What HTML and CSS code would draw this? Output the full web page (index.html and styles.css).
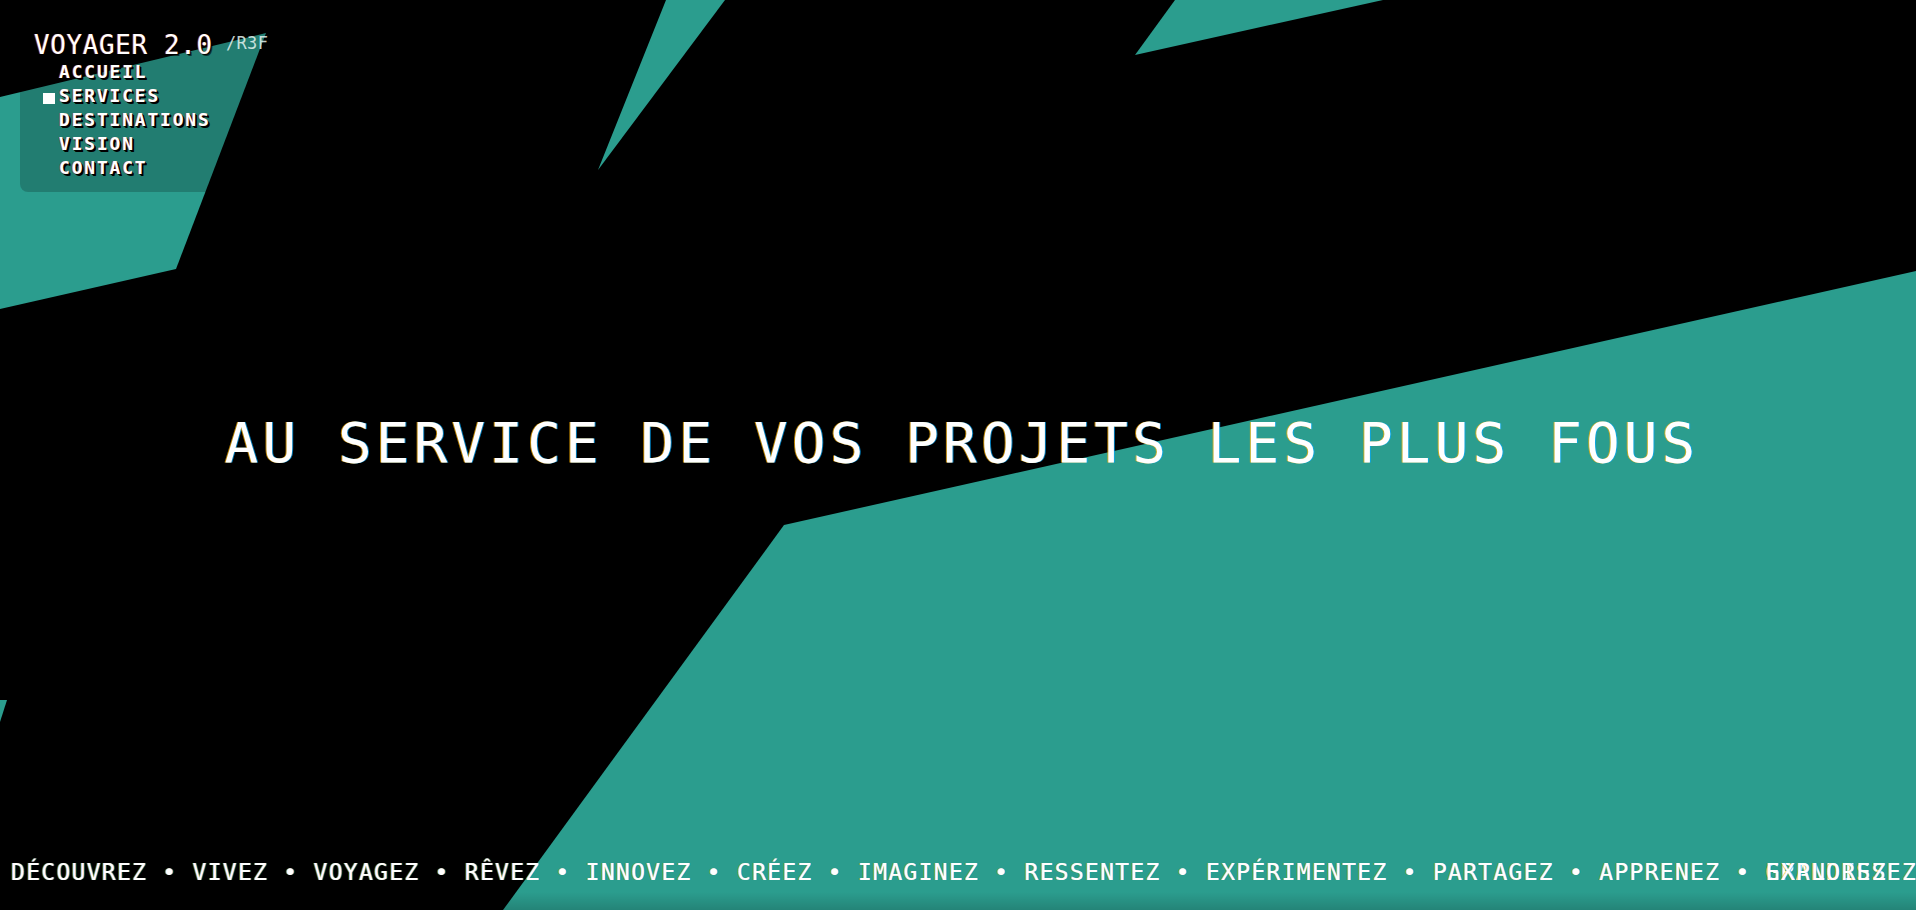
FILE: index.html
```html
<!DOCTYPE html>
<html lang="fr">
<head>
<meta charset="utf-8">
<title>Voyager 2.0</title>
<link rel="stylesheet" href="styles.css">
</head>
<body>
<div class="page">
  <svg class="bg" viewBox="0 0 1916 910" preserveAspectRatio="none" aria-hidden="true">
    <polygon class="shard" points="0,97 266,33 176,269 0,309"/>
    <polygon class="shard" points="666,0 725,0 598,170"/>
    <polygon class="shard" points="1175,0 1383,0 1135,55"/>
    <polygon class="shard" points="784,525 1916,271 1916,910 503,910"/>
    <polygon class="shard" points="0,700 7,700 0,722"/>
  </svg>

  <nav class="nav">
    <div class="brand">VOYAGER 2.0 <sup class="tag">/R3F</sup></div>
    <ul class="menu">
      <li class="item">ACCUEIL</li>
      <li class="item active">SERVICES</li>
      <li class="item">DESTINATIONS</li>
      <li class="item">VISION</li>
      <li class="item">CONTACT</li>
    </ul>
  </nav>

  <main class="hero">
    <h1 class="headline">AU SERVICE DE VOS PROJETS LES PLUS FOUS</h1>
  </main>

  <footer class="marquee">
    <div class="track">DÉCOUVREZ • VIVEZ • VOYAGEZ • RÊVEZ • INNOVEZ • CRÉEZ • IMAGINEZ • RESSENTEZ • EXPÉRIMENTEZ • PARTAGEZ • APPRENEZ • <span class="overlap">GRANDISSEZ<span class="ghost">EXPLOREZ</span></span></div>
    <div class="fade"></div>
  </footer>
</div>
</body>
</html>
```

FILE: styles.css
```css
* { box-sizing: border-box; }

html, body {
  margin: 0;
  padding: 0;
  background: #000;
  overflow: hidden;
}

body {
  font-family: "DejaVu Sans Mono", "Liberation Mono", monospace;
  color: #fff;
}

.page {
  position: relative;
  width: 100vw;
  height: 100vh;
  display: grid;
  grid-template-rows: auto 1fr auto;
  overflow: hidden;
}

.bg {
  position: absolute;
  inset: 0;
  width: 100%;
  height: 100%;
  z-index: 0;
}

.shard { fill: #2b9d8e; }

.nav {
  position: relative;
  z-index: 2;
  justify-self: start;
  margin: 20px 0 0 20px;
  padding: 8px 40px 12px 14px;
  background: rgba(0, 0, 0, 0.2);
  border-radius: 8px;
}

.brand {
  font-size: 26px;
  line-height: 30px;
  letter-spacing: 0.6px;
  white-space: nowrap;
  text-shadow: -1px 0 rgba(255, 90, 60, 0.55), 1px 1px 0 rgba(0, 0, 0, 0.9), 2px 2px 0 rgba(0, 0, 0, 0.6);
}

.tag {
  margin-left: -3px;
  font-size: 17px;
  letter-spacing: 0.3px;
  color: rgba(230, 244, 240, 0.85);
  vertical-align: 5px;
  text-shadow: none;
}

.menu {
  list-style: none;
  margin: 0;
  padding: 0;
}

.item {
  display: flex;
  align-items: center;
  gap: 4px;
  padding-left: 9px;
  font-size: 18px;
  font-weight: bold;
  line-height: 24px;
  letter-spacing: 1.8px;
  white-space: nowrap;
  text-shadow: -1px 0 rgba(255, 70, 40, 0.5), 1px 1px 0 #000, 2px 2px 0 #000;
}

.item::before {
  content: "";
  width: 12px;
  height: 11px;
  margin-top: 5px;
  flex: none;
}

.item.active::before {
  background: #fff;
}

.hero {
  position: relative;
  z-index: 1;
  display: flex;
  justify-content: center;
  align-items: flex-start;
  padding-top: 216px;
}

.headline {
  margin: 0 0 0 8px;
  font-size: 56px;
  font-weight: normal;
  line-height: 70px;
  letter-spacing: 4.1px;
  white-space: nowrap;
  text-shadow: -1px 0 rgba(255, 180, 0, 0.7), 1px 0 rgba(0, 170, 255, 0.7);
}

.marquee {
  position: relative;
  z-index: 1;
  padding: 0 0 23px 11px;
  overflow: hidden;
}

.track {
  font-size: 23px;
  line-height: 30px;
  letter-spacing: 1.28px;
  white-space: nowrap;
  text-shadow: -1px 0 rgba(255, 180, 0, 0.6), 1px 0 rgba(0, 170, 255, 0.6);
}

.overlap {
  position: relative;
}

.ghost {
  position: absolute;
  left: 0;
  top: 0;
  line-height: normal;
}

.fade {
  position: absolute;
  left: 0;
  right: 0;
  bottom: 0;
  height: 18px;
  background: linear-gradient(to bottom, rgba(0, 0, 0, 0), rgba(0, 0, 0, 0.16));
}
```
